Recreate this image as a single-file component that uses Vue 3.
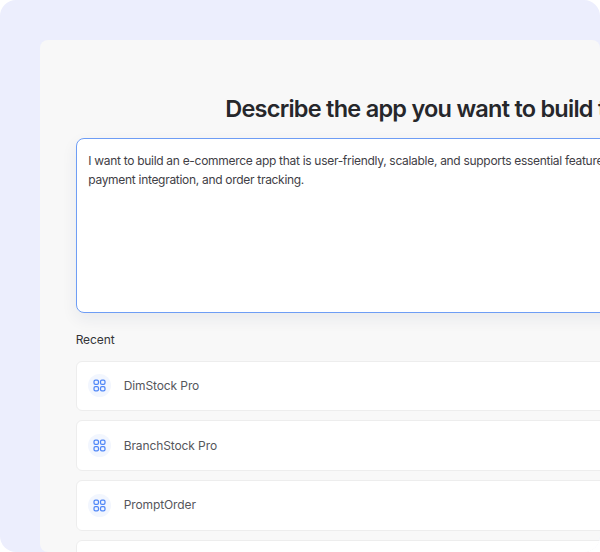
<script setup>
const recent = ['DimStock Pro', 'BranchStock Pro', 'PromptOrder', 'InvoiceFlow']
</script>

<template>
  <div class="frame">
    <main class="card">
      <div class="content">
        <h1 class="title">Describe the app you want to build today</h1>
        <div class="prompt">I want to build an e-commerce app that is user-friendly, scalable, and supports essential features like product listings, a shopping cart, payment integration, and order tracking.</div>
        <h2 class="recent-label">Recent</h2>
        <ul class="recent-list">
          <li v-for="name in recent" :key="name" class="recent-row">
            <span class="icon-badge">
              <svg width="13" height="13" viewBox="0 0 14 14" fill="none" stroke="#4F86F7" stroke-width="1.35">
                <rect x="1.1" y="1.1" width="4.8" height="4.8" rx="1.5" />
                <rect x="8.1" y="1.1" width="4.8" height="4.8" rx="1.5" />
                <rect x="1.1" y="8.1" width="4.8" height="4.8" rx="1.5" />
                <rect x="8.1" y="8.1" width="4.8" height="4.8" rx="1.5" />
              </svg>
            </span>
            <span class="recent-name">{{ name }}</span>
          </li>
        </ul>
      </div>
    </main>
  </div>
</template>

<style>
html, body { margin: 0; background: #fff; }
</style>

<style scoped>
.frame {
  width: 600px;
  height: 552px;
  box-sizing: border-box;
  padding: 40px 0 0 40px;
  background: #ECEEFD;
  border-radius: 16px;
  overflow: hidden;
  font-family: Inter, "Liberation Sans", sans-serif;
}
.card {
  width: 560px;
  height: 512px;
  box-sizing: border-box;
  padding: 53.5px 0 0 35.67px;
  background: #F8F8F8;
  border-radius: 8px;
  overflow: hidden;
}
.content { width: 772px; }
.title {
  width: 732px;
  margin: 0 0 14.5px;
  font-size: 23.5px;
  line-height: 30px;
  font-weight: 600;
  letter-spacing: -0.75px;
  color: #26272B;
  text-align: center;
  white-space: nowrap;
}
.prompt {
  box-sizing: border-box;
  height: 175px;
  padding: 12px 12px 12px 11.6px;
  background: #fff;
  border: 1px solid #6E9DF5;
  border-radius: 8px;
  box-shadow: 0 6px 16px rgba(30, 40, 80, 0.07);
  font-size: 12px;
  letter-spacing: -0.3px;
  line-height: 19px;
  color: #3F4046;
}
.recent-label {
  margin: 19px 0 12.6px;
  font-size: 12px;
  letter-spacing: -0.1px;
  line-height: 16px;
  font-weight: 400;
  color: #333438;
}
.recent-list {
  display: flex;
  flex-direction: column;
  gap: 9px;
  margin: 0;
  padding: 0;
  list-style: none;
}
.recent-row {
  display: flex;
  align-items: center;
  gap: 12.6px;
  box-sizing: border-box;
  height: 50.67px;
  padding: 0 11.4px;
  background: #fff;
  border: 1px solid #EDEDED;
  border-radius: 6px;
}
.icon-badge {
  display: flex;
  align-items: center;
  justify-content: center;
  width: 23px;
  height: 23px;
  border-radius: 50%;
  background: #F2F6FE;
}
.recent-name {
  font-size: 12px;
  letter-spacing: -0.1px;
  line-height: 16px;
  color: #55565C;
}
</style>
